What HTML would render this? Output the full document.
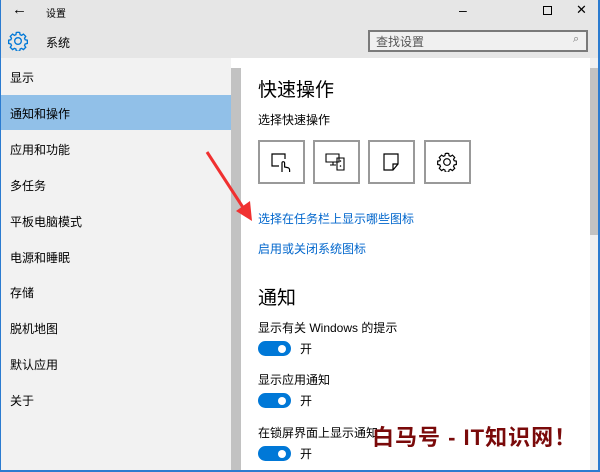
<!DOCTYPE html><html><head><meta charset="utf-8"><style>
*{margin:0;padding:0;box-sizing:border-box}
body{width:600px;height:472px;overflow:hidden;position:relative;background:#fff;font-family:"Liberation Sans","Noto Sans CJK SC",sans-serif;color:#000}
.a{position:absolute;white-space:nowrap}
.top{left:0;top:0;width:600px;height:58px;background:#e6e6e6}
.side{left:0;top:58px;width:231px;height:414px;background:#f2f2f2}
.it{left:10px;font-size:12px;color:#000}
.box{width:47px;height:44px;border:2px solid #999;background:#fff;top:140px}
.lk{left:258px;font-size:12px;color:#0066cc}
.tg{left:258px;width:33px;height:15px;border-radius:8px;background:#0078d7}
.tg:after{content:"";position:absolute;right:5px;top:3.5px;width:8px;height:8px;border-radius:50%;background:#fff}
.on{left:300px;font-size:12px}
.t12{font-size:12px;left:258px}
</style></head><body>
<div class="a top"></div>
<div class="a" style="left:12px;top:1px;font-size:15px">←</div>
<div class="a" style="left:46px;top:5px;font-size:10px">设置</div>
<div class="a" style="left:459px;top:2px;font-size:14px">–</div>
<div class="a" style="left:543px;top:6px;width:9px;height:9px;border:1px solid #000"></div>
<div class="a" style="left:576px;top:2px;font-size:13px">✕</div>
<svg class="a" style="left:8px;top:31px" width="20" height="20" viewBox="0 0 24 24"><path d="M12 1.5l2 .3.5 2.6 1.8.8 2.2-1.5 2.8 2.8-1.5 2.2.8 1.8 2.6.5v4l-2.6.5-.8 1.8 1.5 2.2-2.8 2.8-2.2-1.5-1.8.8-.5 2.6h-4l-.5-2.6-1.8-.8-2.2 1.5-2.8-2.8 1.5-2.2-.8-1.8-2.6-.5v-4l2.6-.5.8-1.8-1.5-2.2 2.8-2.8 2.2 1.5 1.8-.8.5-2.6z" fill="none" stroke="#0078d7" stroke-width="1.6"/><circle cx="12" cy="12" r="4" fill="none" stroke="#0078d7" stroke-width="1.6"/></svg>
<div class="a" style="left:46px;top:34px;font-size:12px">系统</div>
<div class="a" style="left:368px;top:30px;width:220px;height:22px;border:2px solid #7a7a7a;background:#f0f0f0"></div>
<div class="a" style="left:376px;top:33px;font-size:12px;color:#555">查找设置</div>
<div class="a" style="left:573px;top:33px;font-size:11px;color:#777">⌕</div>
<div class="a side"></div>
<div class="a" style="left:0;top:95px;width:231px;height:35px;background:#91c0e8"></div>
<div class="a it" style="top:69px">显示</div>
<div class="a it" style="top:105px">通知和操作</div>
<div class="a it" style="top:141px">应用和功能</div>
<div class="a it" style="top:177px">多任务</div>
<div class="a it" style="top:213px">平板电脑模式</div>
<div class="a it" style="top:249px">电源和睡眠</div>
<div class="a it" style="top:284px">存储</div>
<div class="a it" style="top:320px">脱机地图</div>
<div class="a it" style="top:356px">默认应用</div>
<div class="a it" style="top:392px">关于</div>
<div class="a" style="left:231px;top:68px;width:10px;height:404px;background:#c2c2c2"></div>
<div class="a" style="left:590px;top:58px;width:10px;height:414px;background:#f0f0f0"></div>
<div class="a" style="left:590px;top:68px;width:10px;height:167px;background:#c2c2c2"></div>
<div class="a" style="left:258px;top:75px;font-size:19px">快速操作</div>
<div class="a t12" style="top:111px">选择快速操作</div>
<div class="a box" style="left:258px"></div><div class="a box" style="left:313px"></div><div class="a box" style="left:368px"></div><div class="a box" style="left:424px"></div>
<svg class="a" style="left:270px;top:152px" width="24" height="22" viewBox="0 0 24 22"><path d="M9 14H2V2h13v5M12 20v-9a1.3 1.3 0 012.6 0v4l3 .6c1.5.4 2 1 2 2.5V20" fill="none" stroke="#000" stroke-width="1.2"/></svg>
<svg class="a" style="left:325px;top:152px" width="24" height="20" viewBox="0 0 24 20"><path d="M1 2h13v8H1zM5 13h6M8 10v3M12 6h7v12h-7z" fill="none" stroke="#000" stroke-width="1.1"/><circle cx="15.5" cy="9" r=".8"/><circle cx="15.5" cy="14" r=".8"/></svg>
<svg class="a" style="left:382px;top:152px" width="20" height="20" viewBox="0 0 20 20"><path d="M2 2h14v10l-5 6H2z M11 18v-6h5" fill="none" stroke="#000" stroke-width="1.2"/></svg>
<svg class="a" style="left:437px;top:152px" width="20" height="20" viewBox="0 0 24 24"><path d="M12 1.5l2 .3.5 2.6 1.8.8 2.2-1.5 2.8 2.8-1.5 2.2.8 1.8 2.6.5v4l-2.6.5-.8 1.8 1.5 2.2-2.8 2.8-2.2-1.5-1.8.8-.5 2.6h-4l-.5-2.6-1.8-.8-2.2 1.5-2.8-2.8 1.5-2.2-.8-1.8-2.6-.5v-4l2.6-.5.8-1.8-1.5-2.2 2.8-2.8 2.2 1.5 1.8-.8.5-2.6z" fill="none" stroke="#000" stroke-width="1.4"/><circle cx="12" cy="12" r="4" fill="none" stroke="#000" stroke-width="1.4"/></svg>
<div class="a lk" style="top:210px">选择在任务栏上显示哪些图标</div>
<div class="a lk" style="top:240px">启用或关闭系统图标</div>
<div class="a" style="left:258px;top:283px;font-size:19px">通知</div>
<div class="a t12" style="top:319px">显示有关 Windows 的提示</div>
<div class="a tg" style="top:341px"></div><div class="a on" style="top:340px">开</div>
<div class="a t12" style="top:371px">显示应用通知</div>
<div class="a tg" style="top:393px"></div><div class="a on" style="top:392px">开</div>
<div class="a t12" style="top:424px">在锁屏界面上显示通知</div>
<div class="a tg" style="top:446px"></div><div class="a on" style="top:445px">开</div>
<div class="a" style="left:372px;top:420px;font-size:22px;font-weight:bold;color:#7a0a0a;letter-spacing:1px">白马号 - IT知识网！</div>
<svg class="a" style="left:200px;top:145px" width="60" height="80"><line x1="7" y1="7" x2="44" y2="64" stroke="#f03030" stroke-width="3"/><polygon points="36,66 52,76 50,56" fill="#f03030"/></svg>
<div class="a" style="left:0;top:0;width:1px;height:472px;background:#2b7bd0"></div>
<div class="a" style="left:598px;top:0;width:2px;height:472px;background:#2b7bd0"></div>
<div class="a" style="left:0;top:470px;width:600px;height:2px;background:#2b7bd0"></div>
</body></html>
